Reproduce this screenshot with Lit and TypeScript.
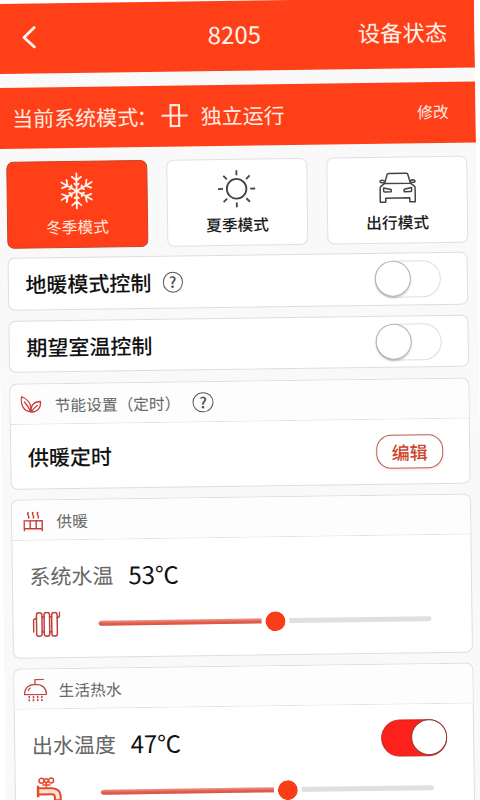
import { LitElement, html, css, svg } from "lit";
import { customElement, property } from "lit/decorators.js";

const snow = html`<svg width="34" height="38" viewBox="-17 -19 34 38" fill="none" stroke="currentColor" stroke-width="1.8" stroke-linecap="round">
  ${[0, 60, 120, 180, 240, 300].map(a => svg`<path transform="rotate(${a})" d="M0 0V-17.5M0 -10.5L-4.6 -14.2M0 -10.5L4.6 -14.2M0 -5.5L-2.2 -7.3M0 -5.5L2.2 -7.3"/>`)}
</svg>`;

const sun = html`<svg width="38" height="38" viewBox="-19 -19 38 38" fill="none" stroke="currentColor" stroke-width="1.8">
  <circle r="9.8"/>
  ${[0, 45, 90, 135, 180, 225, 270, 315].map(a => svg`<path transform="rotate(${a})" d="M0 -13.6V-18.6"/>`)}
</svg>`;

const car = html`<svg width="38" height="32" viewBox="0 0 38 32" fill="none" stroke="currentColor" stroke-width="1.5" stroke-linejoin="round">
  <path d="M6 11.8L8.6 3Q8.9 1.9 9.9 1.9H28.1Q29.1 1.9 29.4 3L32 11.8ZM5.5 12.2L2.4 14.6Q1.5 15.4 1.5 16.6V30.4H7V26.4H31V30.4H36.5V16.6Q36.5 15.4 35.6 14.6L32.5 12.2"/>
  <path d="M6.4 11H3.6Q1.3 10.8 1.5 9.6T4 8.4L6.7 9.6M31.6 11H34.4Q36.7 10.8 36.5 9.6T34 8.4L31.3 9.6"/>
  <path d="M5 16.2L12.5 17.8V20.2H6Q5 20.2 5 19.2ZM33 16.2L25.5 17.8V20.2H32Q33 20.2 33 19.2Z"/>
</svg>`;

const leaf = html`<svg width="21" height="18" viewBox="0 0 21 18" fill="none" stroke="#c93f3f" stroke-width="1.3" stroke-linejoin="round" stroke-linecap="round">
  <path d="M10 16.3C3.5 15.8 -.8 9 1.2 1C7 3.3 11.5 8 10 16.3ZM10 16.3C8.6 13 6 8.5 4 6.3"/>
  <path d="M10.6 16.4C9.5 10.5 13.5 5.8 20 6C20.4 12.2 17 16.8 10.6 16.4ZM10.6 16.4C12.5 13.5 14.5 11.5 16.8 10"/>
</svg>`;

const heater = html`<svg width="20" height="20" viewBox="0 0 20 20" fill="none" stroke="#c63c39" stroke-width="1.4" stroke-linecap="round">
  <path d="M1 19.2V9.2H19V19.2M1 17H19M7 9.2V17M13 9.2V17"/>
  <path d="M5.2 .8C2.8 2.6 7.2 4.2 5.4 6.4M10 .8C7.6 2.6 12 4.2 10.2 6.4M14.8 .8C12.4 2.6 16.8 4.2 15 6.4"/>
</svg>`;

const shower = html`<svg width="24" height="23" viewBox="0 0 24 23" fill="none" stroke="#bf4a45" stroke-width="1.3" stroke-linejoin="round">
  <path d="M11.6 5.6V1H20.5M1 16Q1.2 6 12 5.8Q22.8 6 23 16Z"/>
  <path d="M4.8 12Q5.3 10.2 6.8 9.5" stroke-linecap="round"/>
  <path d="M5.7 17.3V22.8M9.9 17.3V22.8M14.1 17.3V22.8M18.3 17.3V22.8" stroke-width="1.5" stroke-dasharray="2.3 .9"/>
</svg>`;

const radiator = html`<svg width="28" height="26" viewBox="0 0 28 26" fill="none" stroke="#c0403c" stroke-width="1.5" stroke-linecap="round">
  <rect x="4" y="1.2" width="5.5" height="23.6" rx="2.4"/>
  <rect x="11.6" y="1.2" width="5.5" height="23.6" rx="2.4"/>
  <rect x="19.2" y="1.2" width="5.5" height="23.6" rx="2.4"/>
  <path d="M1 20.5V9Q1 7.3 4 7M9.5 5.5H11.6M17.1 5.5H19.2M9.5 20.5H11.6M17.1 20.5H19.2M24.7 6.5Q27.2 6 27.2 3.8V1"/>
</svg>`;

const faucet = html`<svg width="28" height="28" viewBox="0 0 28 28" fill="none" stroke="#e2492d" stroke-width="1.5" stroke-linejoin="round">
  <circle cx="6.8" cy="4.2" r="2.5"/><circle cx="11.6" cy="4.2" r="1.9"/><circle cx="16.4" cy="4.2" r="2.5"/>
  <path d="M11.6 6V11M7.5 8.6H15.7"/>
  <path d="M3.2 11.8H17Q25.8 12.2 25.8 20V24H20V21Q20 18 17 18H3.2Z" fill="#fde0d0" stroke-width="2"/>
  <path d="M3.2 9.2V20.6" stroke-width="2.4"/>
</svg>`;

@customElement("ui-help")
class UiHelp extends LitElement {
  static styles = css`
    :host { display: block; flex: none; }
    .ring { box-sizing: border-box; width: 20.5px; height: 20.5px; border: 1.4px solid #555; border-radius: 50%;
      display: flex; align-items: center; justify-content: center; font: 500 15px/18px "Noto Sans CJK SC", sans-serif; color: #444; }
  `;
  render() { return html`<div class="ring">?</div>`; }
}

@customElement("ui-toggle")
class UiToggle extends LitElement {
  @property({ type: Boolean, reflect: true }) on = false;
  static styles = css`
    :host { display: block; flex: none; }
    .track { box-sizing: border-box; width: 66px; height: 37px; border-radius: 19px; border: 1px solid #dedede; background: #fff; display: flex; }
    .knob { box-sizing: border-box; width: 36px; height: 36px; margin: -0.5px 0 0 -1px; border: 1px solid #b4b4b4; border-radius: 50%; background: #fff; box-shadow: 0 1.5px 2px rgba(0,0,0,.2); }
    :host([on]) .track { background: #fd211b; border-color: #c92622; justify-content: flex-end; }
    :host([on]) .knob { margin: -0.5px -1px 0 0; border-color: #8b3838; box-shadow: none; }
  `;
  render() { return html`<div class="track"><div class="knob"></div></div>`; }
}

@customElement("ui-slider")
class UiSlider extends LitElement {
  @property({ type: Number }) value = 0;
  static styles = css`
    :host { display: block; width: 333px; flex: none; }
    .rail { position: relative; height: 5px; border-radius: 3px; background: #dfdfdf; }
    .fill { height: 5px; border-radius: 3px; background: linear-gradient(#f0968b, #e2604f 55%, #dc5142); }
    .thumb { position: absolute; top: 50%; box-sizing: border-box; width: 28px; height: 28px; margin: -14px 0 0 -14px; border: 4px solid #fff; border-radius: 50%; background: #fa3c17 padding-box; }
  `;
  render() {
    return html`<div class="rail"><div class="fill" style="width:${this.value}%"></div><div class="thumb" style="left:${this.value}%"></div></div>`;
  }
}

@customElement("app-root")
class AppRoot extends LitElement {
  static styles = css`
    :host { display: block; width: 480px; height: 800px; overflow: hidden; background: #fff; color: #111;
      font-family: "Noto Sans CJK SC", sans-serif; }
    * { box-sizing: border-box; }
    svg { display: block; flex: none; }
    .screen { width: 478.6px; height: 830px; margin-left: -4.6px; padding-top: 3.5px; transform: rotate(-0.785deg); transform-origin: 4.6px 0; overflow: hidden; }
    .page { background: #f9f9f9; height: 826px; }
    .top { height: 70px; background: #ff3f18; color: #fff3ec; display: grid; grid-template-columns: 1fr 120px 1fr; align-items: center; padding: 0 27px 0 26px; }
    .title { font-size: 24px; line-height: 30px; text-align: center; margin-top: -3px; }
    .status { font-size: 22.3px; line-height: 30px; text-align: right; margin-top: -4px; }
    .back { margin-top: -4px; }
    .bar { margin-top: 14px; height: 61px; background: #ff3f18; color: #ffeae0; display: flex; align-items: center; padding: 0 25px 0 15.5px; font-size: 21px; line-height: 30px; }
    .colon { width: 17.5px; margin-left: -1.5px; }
    .valve { margin-left: 6px; }
    .link { margin: 0 1.5px 0 auto; font-size: 15.8px; }
    .run { margin-left: 12.5px; }
    .modes { display: flex; gap: 18.6px; padding: 13.3px 0 0 8.6px; }
    .mode { width: 141.5px; height: 87.5px; border: 1px solid #dfe0e6; border-radius: 7px; background: #fff; display: flex; flex-direction: column; align-items: center; font-size: 15.7px; line-height: 20px; font-weight: 500; color: #1b1b1b; }
    .pic { height: 58px; display: flex; align-items: center; color: #444; }
    .mode.active { background: #ff3f18; border-color: #c84428; color: #ffe9de; font-weight: 400; }
    .active .pic { color: #fff4ee; }
    .drive { padding-top: 2px; }
    .name { margin-top: -2.5px; }
    .cards { padding: 9px 0 0 8.8px; display: flex; flex-direction: column; gap: 10.5px; }
    .card { width: 460.7px; border: 1px solid #dedede; border-radius: 7px; background: #fff; }
    .line { display: flex; align-items: center; height: 50.3px; padding: 0 26.7px 0 16.8px; font-size: 21px; line-height: 30px; font-weight: 500; }
    .line ui-help { margin-left: 11px; }
    .line ui-toggle, .line .edit { margin-left: auto; }
    .head { height: 40px; padding-top: 2px; border-bottom: 1px solid #e2e2e2; display: flex; align-items: center; background: #fdfdfd; border-radius: 7px 7px 0 0; font-size: 15.7px; line-height: 22px; color: #666; }
    .ic { width: 44.5px; padding-right: 2.5px; display: flex; justify-content: center; }
    .head span { margin-top: 1px; }
    .head ui-help { margin: -1px 0 0 12.5px; }
    .timer { height: 63.8px; }
    .edit { width: 67px; height: 34px; border: 1.3px solid #ae6253; border-radius: 15px; display: flex; align-items: center; justify-content: center; font-size: 18px; color: #cd4529; box-shadow: 0 1px 3px rgba(255,80,50,.22); }
    .temp { height: 69px; font-weight: 400; color: #666; }
    .temp ui-toggle { margin-top: -3px; }
    .deg { color: #111; font-size: 24px; margin-left: 14.8px; }
    .level { display: flex; height: 47.5px; align-items: flex-start; padding-left: 19.3px; }
    .level .gap { width: 38px; }
    .level ui-slider { margin-top: 12px; }
    .radiator { margin-top: 1.8px; }
    .faucet { margin-top: -2.5px; }
  `;
  render() {
    return html`<div class="screen"><div class="page">
      <div class="top">
        <svg class="back" width="16" height="24" viewBox="0 0 16 24" fill="none" stroke="currentColor" stroke-width="2.8" stroke-linecap="round" stroke-linejoin="round"><path d="M12.8 3L2.5 12.8L12.8 22.5"/></svg>
        <div class="title">8205</div>
        <div class="status">设备状态</div>
      </div>
      <div class="bar">
        <span>当前系统模式</span><span class="colon">：</span>
        <svg class="valve" width="28" height="24" viewBox="0 0 28 24" fill="none" stroke="currentColor" stroke-width="2.1"><path d="M1 12H27M10 1.5H18.5V22.5H10Z"/></svg>
        <span class="run">独立运行</span><span class="link">修改</span>
      </div>
      <div class="modes">
        <div class="mode active"><div class="pic">${snow}</div><div class="name">冬季模式</div></div>
        <div class="mode"><div class="pic">${sun}</div><div class="name">夏季模式</div></div>
        <div class="mode"><div class="pic drive">${car}</div><div class="name">出行模式</div></div>
      </div>
      <div class="cards">
        <div class="card"><div class="line"><span>地暖模式控制</span><ui-help></ui-help><ui-toggle></ui-toggle></div></div>
        <div class="card"><div class="line"><span>期望室温控制</span><ui-toggle></ui-toggle></div></div>
        <div class="card">
          <div class="head"><div class="ic">${leaf}</div><span>节能设置（定时）</span><ui-help></ui-help></div>
          <div class="line timer"><span>供暖定时</span><div class="edit">编辑</div></div>
        </div>
        <div class="card">
          <div class="head"><div class="ic">${heater}</div><span>供暖</span></div>
          <div class="line temp"><span>系统水温</span><span class="deg">53℃</span></div>
          <div class="level"><div class="radiator">${radiator}</div><div class="gap"></div><ui-slider .value=${53}></ui-slider></div>
        </div>
        <div class="card">
          <div class="head"><div class="ic">${shower}</div><span>生活热水</span></div>
          <div class="line temp"><span>出水温度</span><span class="deg">47℃</span><ui-toggle on></ui-toggle></div>
          <div class="level"><div class="faucet">${faucet}</div><div class="gap"></div><ui-slider .value=${56}></ui-slider></div>
        </div>
      </div>
    </div></div>`;
  }
}
